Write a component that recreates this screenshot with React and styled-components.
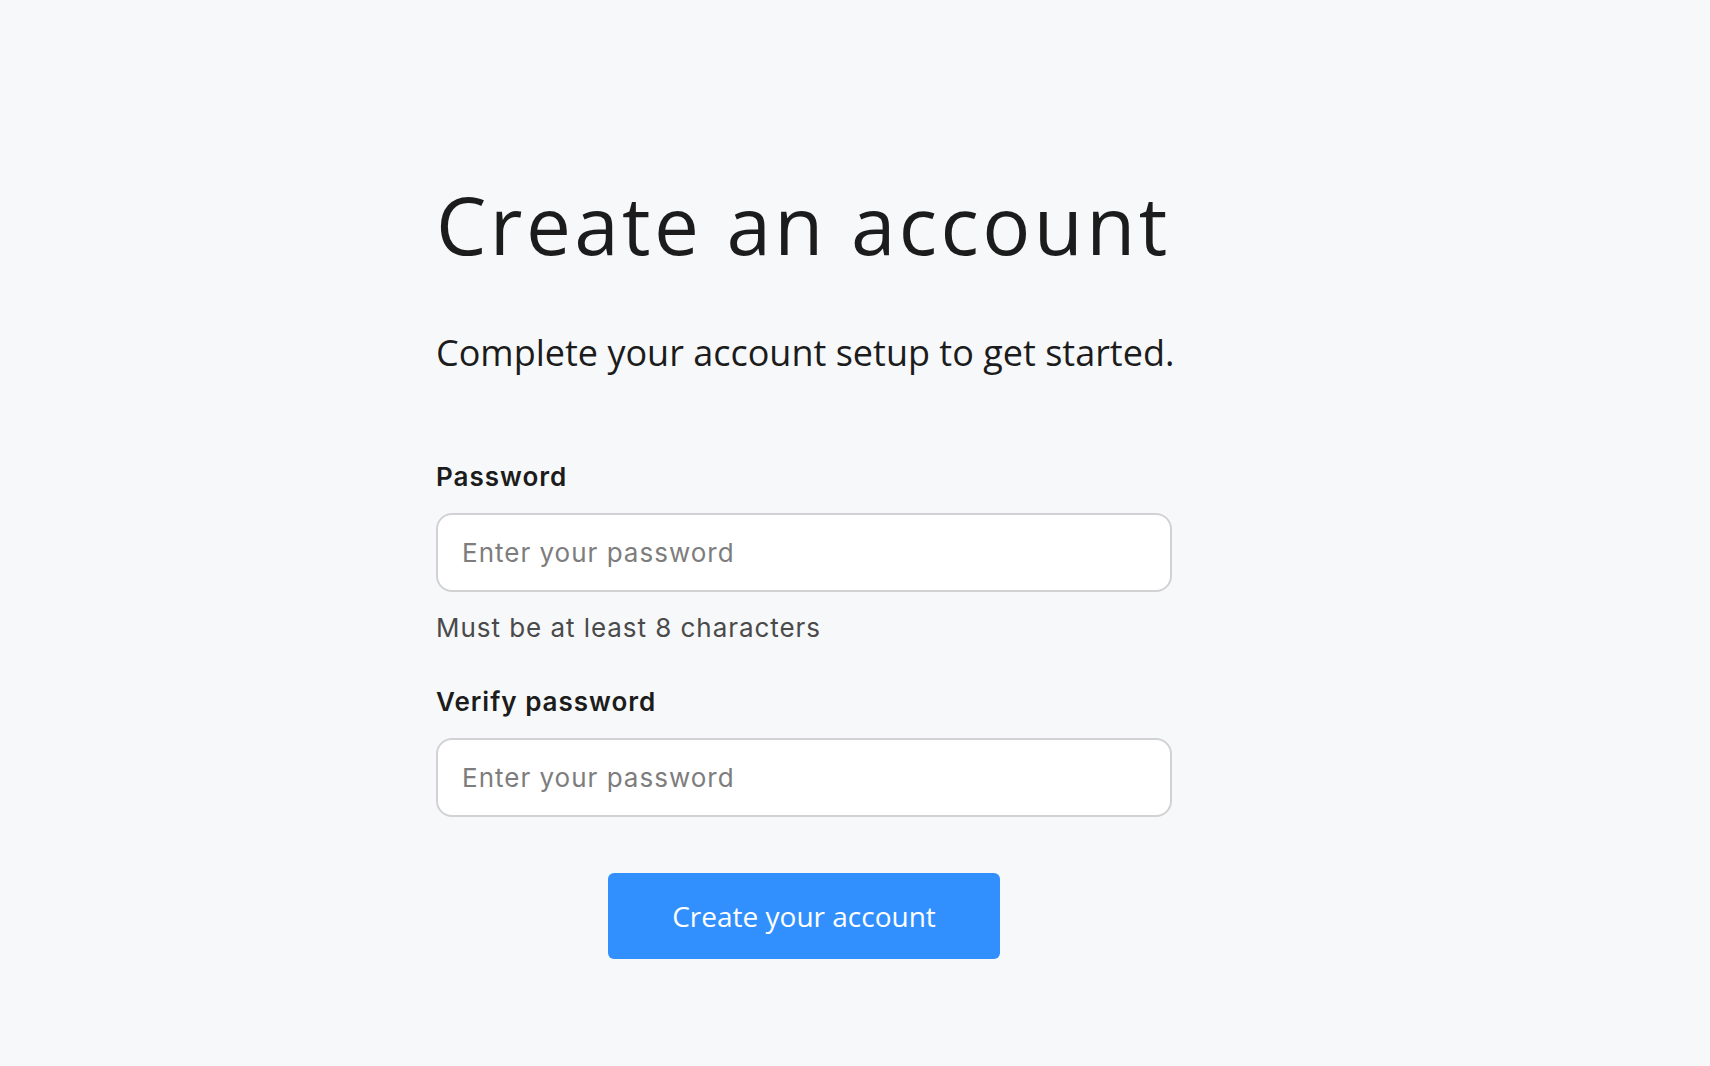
import styled, { createGlobalStyle } from 'styled-components';

const GlobalStyle = createGlobalStyle`
  html, body {
    margin: 0;
    padding: 0;
    background-color: #f7f8fa;
  }
  * {
    box-sizing: border-box;
  }
`;

const Page = styled.main`
  min-height: 100vh;
  padding: 176px 0 80px 436px;
`;

const FormBlock = styled.form`
  width: 736px;
  display: flex;
  flex-direction: column;
`;

const Title = styled.h1`
  margin: 0;
  font-family: 'Open Sans', sans-serif;
  font-weight: 400;
  font-size: 80px;
  line-height: 96px;
  letter-spacing: 3.4px;
  white-space: nowrap;
  color: #1c1c1c;
`;

const Subtitle = styled.p`
  margin: 57px 0 0;
  font-family: 'Open Sans', sans-serif;
  font-size: 36px;
  line-height: 48px;
  white-space: nowrap;
  color: #1c1c1c;
`;

const Field = styled.div`
  display: flex;
  flex-direction: column;
  gap: 20px;
  margin-top: ${(p) => p.$top}px;
`;

const Label = styled.label`
  font-family: 'Inter', sans-serif;
  font-weight: 600;
  font-size: 26px;
  line-height: 32px;
  letter-spacing: 1px;
  color: #1c1c1c;
`;

const Input = styled.input`
  width: 100%;
  height: 79px;
  padding: 0 24px;
  border: 2px solid #d2d2d4;
  border-radius: 16px;
  background-color: #ffffff;
  font-family: 'Inter', sans-serif;
  font-size: 26px;
  letter-spacing: 1px;
  color: #1c1c1c;
  outline: none;
  &::placeholder {
    color: #7d7d7d;
  }
`;

const Hint = styled.div`
  font-family: 'Inter', sans-serif;
  font-size: 26px;
  line-height: 32px;
  letter-spacing: 0.95px;
  color: #4a4a4a;
`;

const SubmitButton = styled.button`
  align-self: center;
  margin-top: 56px;
  width: 392px;
  height: 86px;
  border: none;
  border-radius: 6px;
  background-color: #3190fe;
  color: #ffffff;
  font-family: 'Open Sans', sans-serif;
  font-size: 28px;
  cursor: pointer;
`;

const App = () => {
  return (
    <>
      <GlobalStyle />
      <Page>
        <FormBlock onSubmit={(e) => e.preventDefault()}>
          <Title>Create an account</Title>
          <Subtitle>Complete your account setup to get started.</Subtitle>
          <Field $top={84}>
            <Label htmlFor="password">Password</Label>
            <Input id="password" type="password" placeholder="Enter your password" />
            <Hint>Must be at least 8 characters</Hint>
          </Field>
          <Field $top={42}>
            <Label htmlFor="verify">Verify password</Label>
            <Input id="verify" type="password" placeholder="Enter your password" />
          </Field>
          <SubmitButton type="submit">Create your account</SubmitButton>
        </FormBlock>
      </Page>
    </>
  );
};

export default App;
